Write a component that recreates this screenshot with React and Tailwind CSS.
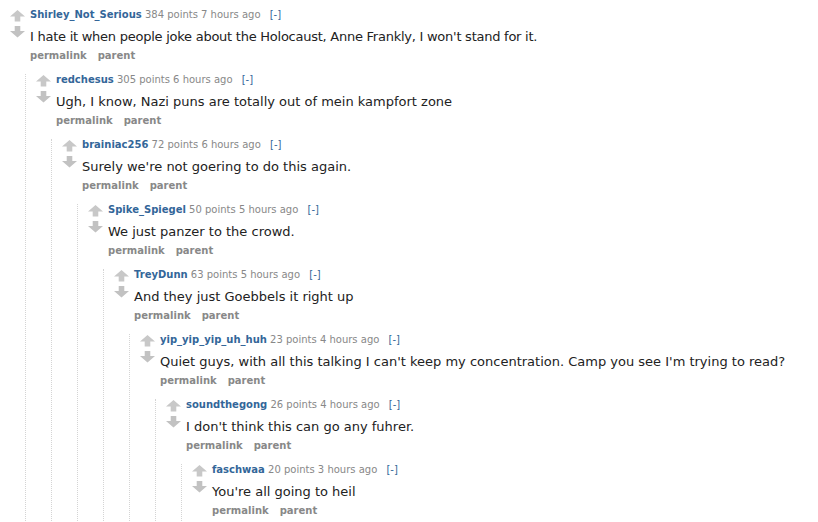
import React from 'react';

const thread = [
  { user: 'Shirley_Not_Serious', points: 384, age: '7 hours ago', body: "I hate it when people joke about the Holocaust, Anne Frankly, I won't stand for it.", tight: true },
  { user: 'redchesus', points: 305, age: '6 hours ago', body: 'Ugh, I know, Nazi puns are totally out of mein kampfort zone' },
  { user: 'brainiac256', points: 72, age: '6 hours ago', body: "Surely we're not goering to do this again." },
  { user: 'Spike_Spiegel', points: 50, age: '5 hours ago', body: 'We just panzer to the crowd.' },
  { user: 'TreyDunn', points: 63, age: '5 hours ago', body: 'And they just Goebbels it right up' },
  { user: 'yip_yip_yip_uh_huh', points: 23, age: '4 hours ago', body: "Quiet guys, with all this talking I can't keep my concentration. Camp you see I'm trying to read?" },
  { user: 'soundthegong', points: 26, age: '4 hours ago', body: "I don't think this can go any fuhrer." },
  { user: 'faschwaa', points: 20, age: '3 hours ago', body: "You're all going to heil" },
];

const Arrows = () => (
  <svg width="15" height="28" viewBox="0 0 15 28" className="mt-[1px] shrink-0">
    <path d="M7.5 0 L15 6.5 L10.3 6.5 L10.3 11.5 L4.7 11.5 L4.7 6.5 L0 6.5 Z" fill="#c8c8c8" />
    <path d="M4.7 16 L10.3 16 L10.3 21 L15 21 L7.5 27.5 L0 21 L4.7 21 Z" fill="#c2c2c2" />
  </svg>
);

const Comment = ({ index }) => {
  const c = thread[index];
  const hasChild = index < thread.length - 1;

  return (
    <div>
      <div className="flex pl-[10px]">
        <Arrows />
        <div className="ml-[5px]">
          <div className="text-[10px] leading-[12px] whitespace-nowrap">
            <span className="font-bold text-[#369]">{c.user}</span>
            <span className="text-[#888]"> {c.points} points {c.age}</span>
            <span className="text-[#369] ml-[6px]"> [-]</span>
          </div>
          <div
            className={`mt-[7px] text-[13px] leading-[18px] text-[#222] whitespace-nowrap ${c.tight ? 'tracking-[-0.25px]' : ''}`}
          >
            {c.body}
          </div>
          <div className="mt-[4px] flex gap-[11px] text-[10px] leading-[12px] font-bold text-[#888]">
            <span>permalink</span>
            <span>parent</span>
          </div>
        </div>
      </div>
      {hasChild ? (
        <div className="ml-[25px] mt-[12px] border-l border-dotted border-[#d4d4d4]">
          <Comment index={index + 1} />
        </div>
      ) : (
        <div className="h-[20px]" />
      )}
    </div>
  );
};

export default function App() {
  return (
    <div
      className="bg-white w-[818px] h-[522px] overflow-hidden pt-[9px]"
      style={{ fontFamily: '"DejaVu Sans", Verdana, sans-serif' }}
    >
      <Comment index={0} />
    </div>
  );
}
